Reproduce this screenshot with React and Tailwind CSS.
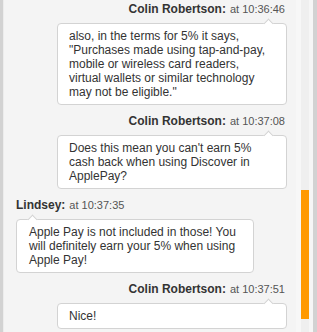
const MESSAGES = [
  {
    id: 1,
    name: 'Colin Robertson:',
    time: 'at 10:36:46',
    mine: true,
    text: 'also, in the terms for 5% it says, "Purchases made using tap-and-pay, mobile or wireless card readers, virtual wallets or similar technology may not be eligible."',
  },
  {
    id: 2,
    name: 'Colin Robertson:',
    time: 'at 10:37:08',
    mine: true,
    text: "Does this mean you can't earn 5% cash back when using Discover in ApplePay?",
  },
  {
    id: 3,
    name: 'Lindsey:',
    time: 'at 10:37:35',
    mine: false,
    text: 'Apple Pay is not included in those! You will definitely earn your 5% when using Apple Pay!',
  },
  {
    id: 4,
    name: 'Colin Robertson:',
    time: 'at 10:37:51',
    mine: true,
    text: 'Nice!',
  },
];

function Message({ msg, first }) {
  return (
    <div className={`flex flex-col ${msg.mine ? 'items-end' : 'items-start'} ${first ? 'mt-px' : 'mt-[8px]'}`}>
      <div
        className={`h-[16px] flex items-center gap-[4px] ${msg.mine ? 'pr-[2px]' : ''}`}
      >
        <span className="text-[12px] font-bold text-[#333]">{msg.name}</span>
        <span className="text-[11px] text-[#555]">{msg.time}</span>
      </div>
      <div
        className={`relative mt-[6px] bg-white border border-[#d3d3d3] rounded-[4px] py-[5px] text-[12px] leading-[14px] text-[#333] ${
          msg.mine ? 'w-[230px] pl-[11px] pr-[17px]' : 'w-[238px] pl-[12px] pr-[10px]'
        }`}
      >
        <span
          className={`absolute top-[-4px] w-[7px] h-[7px] bg-white border-l border-t border-[#d3d3d3] rotate-45 ${
            msg.mine ? 'right-[14px]' : 'left-[12px]'
          }`}
        />
        {msg.text}
      </div>
    </div>
  );
}

export default function App() {
  return (
    <div
      className="w-[317px] h-[332px] flex overflow-hidden bg-[#f4f4f4]"
      style={{ fontFamily: '"Liberation Sans", Arial, sans-serif' }}
    >
      <div className="w-[3px] bg-[#d2d2d2]" />
      <div className="w-[1px] bg-[#ececec]" />
      <div className="flex-1 flex flex-col pl-[12px] pr-[9px]">
        {MESSAGES.map((m, i) => (
          <Message key={m.id} msg={m} first={i === 0} />
        ))}
      </div>
      <div className="w-[5px] bg-[#f7f7f7]" />
      <div className="w-[8px] bg-[#efefef] flex flex-col">
        <div className="mt-[190px] h-[129px] bg-[#ff9900]" />
      </div>
      <div className="w-[4px] bg-[#f6f6f6]" />
      <div className="w-[4px] bg-[#d2d2d2]" />
    </div>
  );
}
